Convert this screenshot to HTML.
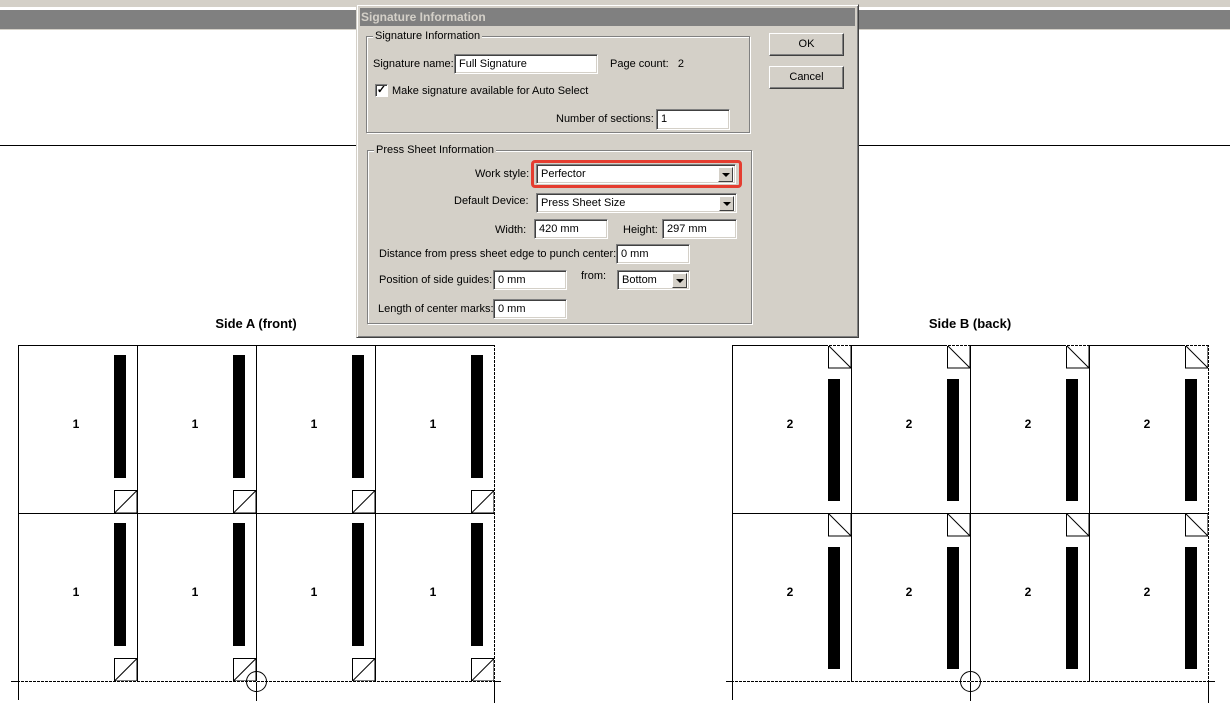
<!DOCTYPE html>
<html><head><meta charset="utf-8"><style>
*{margin:0;padding:0;box-sizing:border-box}
body{width:1230px;height:713px;overflow:hidden;background:#fff;font-family:"Liberation Sans",sans-serif;font-size:11px;color:#000;position:relative}
.a{position:absolute}
.inp{position:absolute;background:#fff;border:1px solid;border-color:#808080 #fff #fff #808080;box-shadow:inset 1px 1px 0 #404040,inset -1px -1px 0 #d4d0c8;padding:3px 0 0 4px;font-size:11px;white-space:nowrap}
.btn{position:absolute;background:#d4d0c8;border:1px solid;border-color:#fff #404040 #404040 #fff;box-shadow:inset -1px -1px 0 #808080;text-align:center;padding-top:4px}
.grp{position:absolute;border:1px solid #808080;box-shadow:1px 1px 0 #fff,inset 1px 1px 0 #fff}
.lg{position:absolute;background:#d4d0c8;padding:0 2px;top:-7px;left:6px}
.dd{position:absolute;right:2px;top:2px;width:15px;height:15px;background:#d4d0c8;border:1px solid;border-color:#fff #404040 #404040 #fff}
.dd:after{content:"";position:absolute;left:3px;top:5px;border:4px solid transparent;border-top:4px solid #000;border-bottom:0}
.lbl{position:absolute;white-space:nowrap}
</style></head><body>
<div class="a" style="left:0;top:0;width:1230px;height:7px;background:#d4d0c8"></div>
<div class="a" style="left:0;top:7px;width:1230px;height:2px;background:#fff"></div>
<div class="a" style="left:0;top:10px;width:1230px;height:19px;background:#808080"></div>
<div class="a" style="left:0;top:29px;width:1230px;height:1px;background:#d4d0c8"></div>
<div class="a" style="left:0;top:145px;width:1230px;height:1px;background:#000"></div>

<svg class="a" style="left:0;top:0" width="1230" height="713">
<defs>
<g id="ca"><rect x="0.5" y="0.5" width="119" height="168" fill="#fff" stroke="#000"/><rect x="96" y="10" width="12" height="123" fill="#000"/><rect x="96.5" y="145.5" width="22.5" height="22.5" fill="#fff" stroke="#000"/><line x1="96.5" y1="168" x2="119" y2="145.5" stroke="#000"/><text x="58" y="83" font-family="Liberation Sans" font-weight="bold" font-size="12" text-anchor="middle">1</text></g>
<g id="cb"><rect x="0.5" y="0.5" width="119" height="168" fill="#fff" stroke="#000"/><rect x="96.5" y="0.5" width="22.5" height="22.5" fill="#fff" stroke="#000"/><line x1="96.5" y1="0.5" x2="119" y2="23" stroke="#000"/><rect x="96" y="34" width="12" height="122" fill="#000"/><text x="58" y="83" font-family="Liberation Sans" font-weight="bold" font-size="12" text-anchor="middle">2</text></g>
</defs>
<text x="256" y="328" font-weight="bold" font-size="13" text-anchor="middle" font-family="Liberation Sans">Side A (front)</text>
<text x="970" y="328" font-weight="bold" font-size="13" text-anchor="middle" font-family="Liberation Sans">Side B (back)</text>
<use href="#ca" x="18" y="345"/><use href="#ca" x="137" y="345"/><use href="#ca" x="256" y="345"/><use href="#ca" x="375" y="345"/>
<use href="#ca" x="18" y="513"/><use href="#ca" x="137" y="513"/><use href="#ca" x="256" y="513"/><use href="#ca" x="375" y="513"/>
<use href="#cb" x="732" y="345"/><use href="#cb" x="851" y="345"/><use href="#cb" x="970" y="345"/><use href="#cb" x="1089" y="345"/>
<use href="#cb" x="732" y="513"/><use href="#cb" x="851" y="513"/><use href="#cb" x="970" y="513"/><use href="#cb" x="1089" y="513"/>
<g stroke="#000" fill="none">
<line x1="11" y1="681.5" x2="501" y2="681.5"/><line x1="18.5" y1="670" x2="18.5" y2="700"/><line x1="256.5" y1="670" x2="256.5" y2="701"/><line x1="494.5" y1="670" x2="494.5" y2="703"/>
<circle cx="256.5" cy="681.5" r="10"/>
<line x1="726" y1="681.5" x2="1215" y2="681.5"/><line x1="732.5" y1="670" x2="732.5" y2="700"/><line x1="970.5" y1="670" x2="970.5" y2="701"/><line x1="1208.5" y1="670" x2="1208.5" y2="703"/>
<circle cx="970.5" cy="681.5" r="10"/>
</g>
<g stroke="#fff" stroke-dasharray="1,3">
<line x1="20" y1="681.5" x2="494" y2="681.5"/><line x1="734" y1="681.5" x2="1208" y2="681.5"/>
<line x1="1208.5" y1="347" x2="1208.5" y2="681"/><line x1="494.5" y1="347" x2="494.5" y2="681"/>
<line x1="828" y1="345.5" x2="851" y2="345.5"/><line x1="947" y1="345.5" x2="970" y2="345.5"/><line x1="1066" y1="345.5" x2="1089" y2="345.5"/><line x1="1185" y1="345.5" x2="1208" y2="345.5"/>
</g>
</svg>

<!-- dialog -->
<div class="a" style="left:356px;top:4px;width:503px;height:334px;background:#d4d0c8;border:1px solid;border-color:#d4d0c8 #404040 #404040 #d4d0c8;box-shadow:inset 1px 1px 0 #fff,inset -1px -1px 0 #808080">
<div class="a" style="left:3px;top:3px;width:495px;height:18px;background:#808080;color:#d4d0c8;font-weight:bold;font-size:12px;padding:2px 0 0 1px">Signature Information</div>
<div class="grp" style="left:9px;top:31px;width:384px;height:97px"><span class="lg">Signature Information</span></div>
<div class="lbl" style="left:16px;top:53px">Signature name:</div>
<div class="inp" style="left:97px;top:49px;width:144px;height:20px">Full Signature</div>
<div class="lbl" style="left:253px;top:53px">Page count:&nbsp;&nbsp;&nbsp;2</div>
<div class="a" style="left:18px;top:79px;width:13px;height:13px;background:#fff;border:1px solid;border-color:#808080 #fff #fff #808080;box-shadow:inset 1px 1px 0 #404040;font-size:11px;line-height:11px;text-align:center;font-weight:bold">✓</div>
<div class="lbl" style="left:35px;top:80px">Make signature available for Auto Select</div>
<div class="lbl" style="left:199px;top:108px">Number of sections:</div>
<div class="inp" style="left:299px;top:104px;width:74px;height:21px">1</div>
<div class="grp" style="left:10px;top:145px;width:385px;height:174px"><span class="lg">Press Sheet Information</span></div>
<div class="lbl" style="left:118px;top:163px">Work style:</div>
<div class="a" style="left:174px;top:155px;width:211px;height:28px;border:3px solid #e53d30;border-radius:4px"></div>
<div class="inp" style="left:179px;top:159px;width:200px;height:20px">Perfector<span class="dd"></span></div>
<div class="lbl" style="left:97px;top:190px">Default Device:</div>
<div class="inp" style="left:179px;top:188px;width:201px;height:20px">Press Sheet Size<span class="dd"></span></div>
<div class="lbl" style="left:138px;top:219px">Width:</div>
<div class="inp" style="left:177px;top:214px;width:74px;height:20px">420 mm</div>
<div class="lbl" style="left:266px;top:219px">Height:</div>
<div class="inp" style="left:305px;top:214px;width:75px;height:20px">297 mm</div>
<div class="lbl" style="left:22px;top:243px">Distance from press sheet edge to punch center:</div>
<div class="inp" style="left:259px;top:239px;width:74px;height:20px">0 mm</div>
<div class="lbl" style="left:22px;top:269px">Position of side guides:</div>
<div class="inp" style="left:136px;top:265px;width:74px;height:20px">0 mm</div>
<div class="lbl" style="left:224px;top:265px">from:</div>
<div class="inp" style="left:260px;top:265px;width:73px;height:20px">Bottom<span class="dd"></span></div>
<div class="lbl" style="left:21px;top:298px">Length of center marks:</div>
<div class="inp" style="left:136px;top:294px;width:74px;height:20px">0 mm</div>
<div class="btn" style="left:412px;top:28px;width:75px;height:23px">OK</div>
<div class="btn" style="left:412px;top:61px;width:75px;height:23px">Cancel</div>
</div>
</body></html>
